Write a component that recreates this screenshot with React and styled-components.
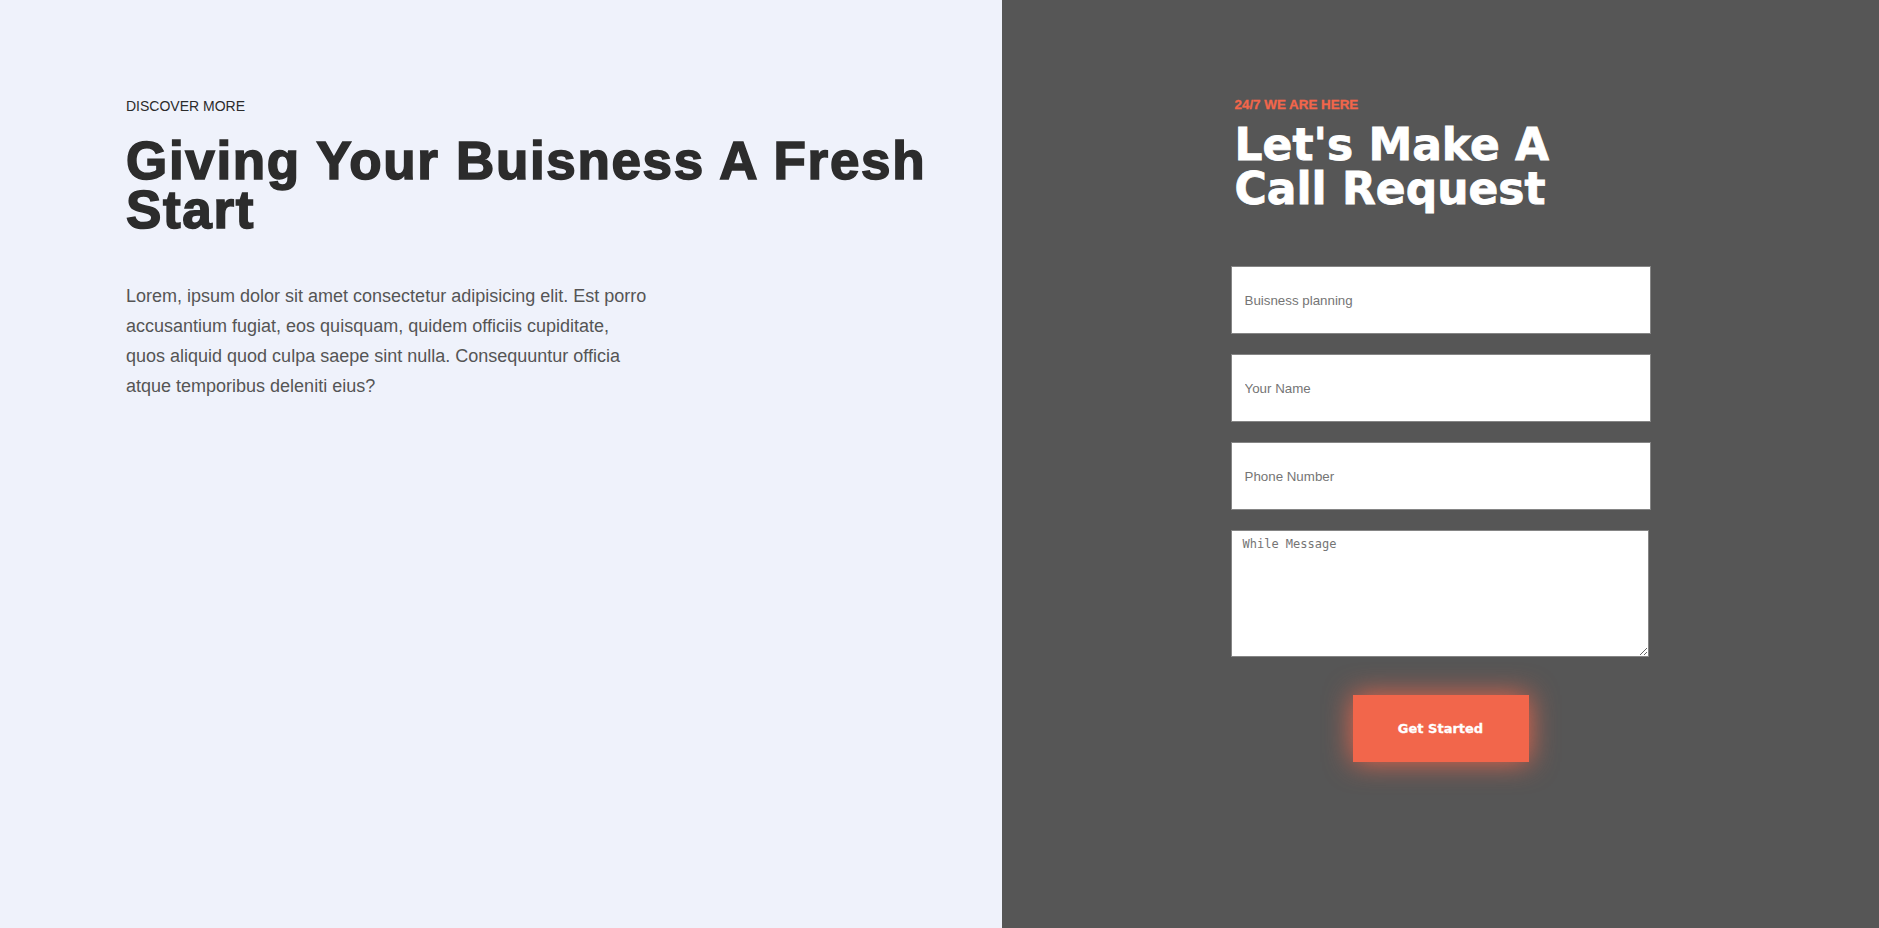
import React from "react";
import styled, { createGlobalStyle } from "styled-components";

const GlobalStyle = createGlobalStyle`
  html, body {
    margin: 0;
    padding: 0;
  }
  body {
    font-family: "Liberation Sans", Arial, sans-serif;
  }
  * {
    box-sizing: border-box;
  }
`;

const Page = styled.div`
  display: flex;
  min-height: 100vh;
  width: 100%;
`;

const Intro = styled.section`
  flex: 0 0 1002px;
  background: #eff2fb;
  padding: 98px 0 0 126px;
`;

const Eyebrow = styled.p`
  margin: 0;
  font-family: "Liberation Sans", Arial, sans-serif;
  font-size: 14px;
  line-height: 16px;
  color: #2b2b2b;
  text-transform: uppercase;
`;

const Title = styled.h1`
  margin: 22px 0 0;
  max-width: 850px;
  font-family: "Liberation Sans", Arial, sans-serif;
  font-weight: 700;
  font-size: 53px;
  line-height: 49px;
  letter-spacing: 1.65px;
  color: #2c2c2c;
  -webkit-text-stroke: 1.6px #2c2c2c;
`;

const Lead = styled.p`
  margin: 47px 0 0;
  max-width: 525px;
  font-family: "Liberation Sans", Arial, sans-serif;
  font-size: 18px;
  line-height: 30px;
  color: #555555;
`;

const ContactPanel = styled.section`
  flex: 1 1 auto;
  background: #565656;
  display: flex;
  justify-content: center;
  padding-top: 97px;
`;

const Form = styled.form`
  width: 420px;
  display: flex;
  flex-direction: column;
`;

const Tag = styled.span`
  display: block;
  padding-left: 4px;
  font-family: "Liberation Sans", Arial, sans-serif;
  font-weight: 700;
  font-size: 13.4px;
  line-height: 15px;
  color: #f2664b;
  text-transform: uppercase;
  -webkit-text-stroke: 0.3px #f2664b;
`;

const FormTitle = styled.h2`
  margin: 11px 0 0;
  padding-left: 4px;
  font-family: "DejaVu Sans", sans-serif;
  font-weight: 700;
  font-size: 44px;
  line-height: 44px;
  color: #ffffff;
  -webkit-text-stroke: 0.8px #ffffff;
`;

const Fields = styled.div`
  margin-top: 55px;
  display: flex;
  flex-direction: column;
  gap: 20px;
`;

const Input = styled.input`
  width: 100%;
  height: 68px;
  padding: 0 13px;
  border: 1px solid #858585;
  background: #ffffff;
  font-family: "Liberation Sans", Arial, sans-serif;
  font-size: 13.33px;
  color: #333;
  outline: none;
  &::placeholder {
    color: #757575;
  }
`;

const Message = styled.textarea`
  width: calc(100% - 2px);
  height: 127px;
  padding: 6px 11px;
  border: 1px solid #858585;
  background: #ffffff;
  font-family: "DejaVu Sans Mono", monospace;
  font-size: 12px;
  color: #333;
  outline: none;
  &::placeholder {
    color: #757575;
  }
`;

const Actions = styled.div`
  display: flex;
  justify-content: center;
  margin-top: 38px;
`;

const Button = styled.button`
  width: 176px;
  height: 67px;
  border: none;
  background: #f2664b;
  color: #ffffff;
  font-family: "DejaVu Sans", sans-serif;
  font-weight: 700;
  font-size: 13px;
  cursor: pointer;
  -webkit-text-stroke: 0.3px #ffffff;
  box-shadow: 0 0 28px rgba(242, 102, 75, 0.95);
`;

export default function App() {
  return (
    <>
      <GlobalStyle />
      <Page>
        <Intro>
          <Eyebrow>Discover More</Eyebrow>
          <Title>Giving Your Buisness A Fresh Start</Title>
          <Lead>
            Lorem, ipsum dolor sit amet consectetur adipisicing elit. Est porro
            accusantium fugiat, eos quisquam, quidem officiis cupiditate, quos
            aliquid quod culpa saepe sint nulla. Consequuntur officia atque
            temporibus deleniti eius?
          </Lead>
        </Intro>
        <ContactPanel>
          <Form onSubmit={(e) => e.preventDefault()}>
            <Tag>24/7 We Are Here</Tag>
            <FormTitle>Let's Make A Call Request</FormTitle>
            <Fields>
              <Input type="text" placeholder="Buisness planning" />
              <Input type="text" placeholder="Your Name" />
              <Input type="text" placeholder="Phone Number" />
              <Message placeholder="While Message" />
            </Fields>
            <Actions>
              <Button type="submit">Get Started</Button>
            </Actions>
          </Form>
        </ContactPanel>
      </Page>
    </>
  );
}
